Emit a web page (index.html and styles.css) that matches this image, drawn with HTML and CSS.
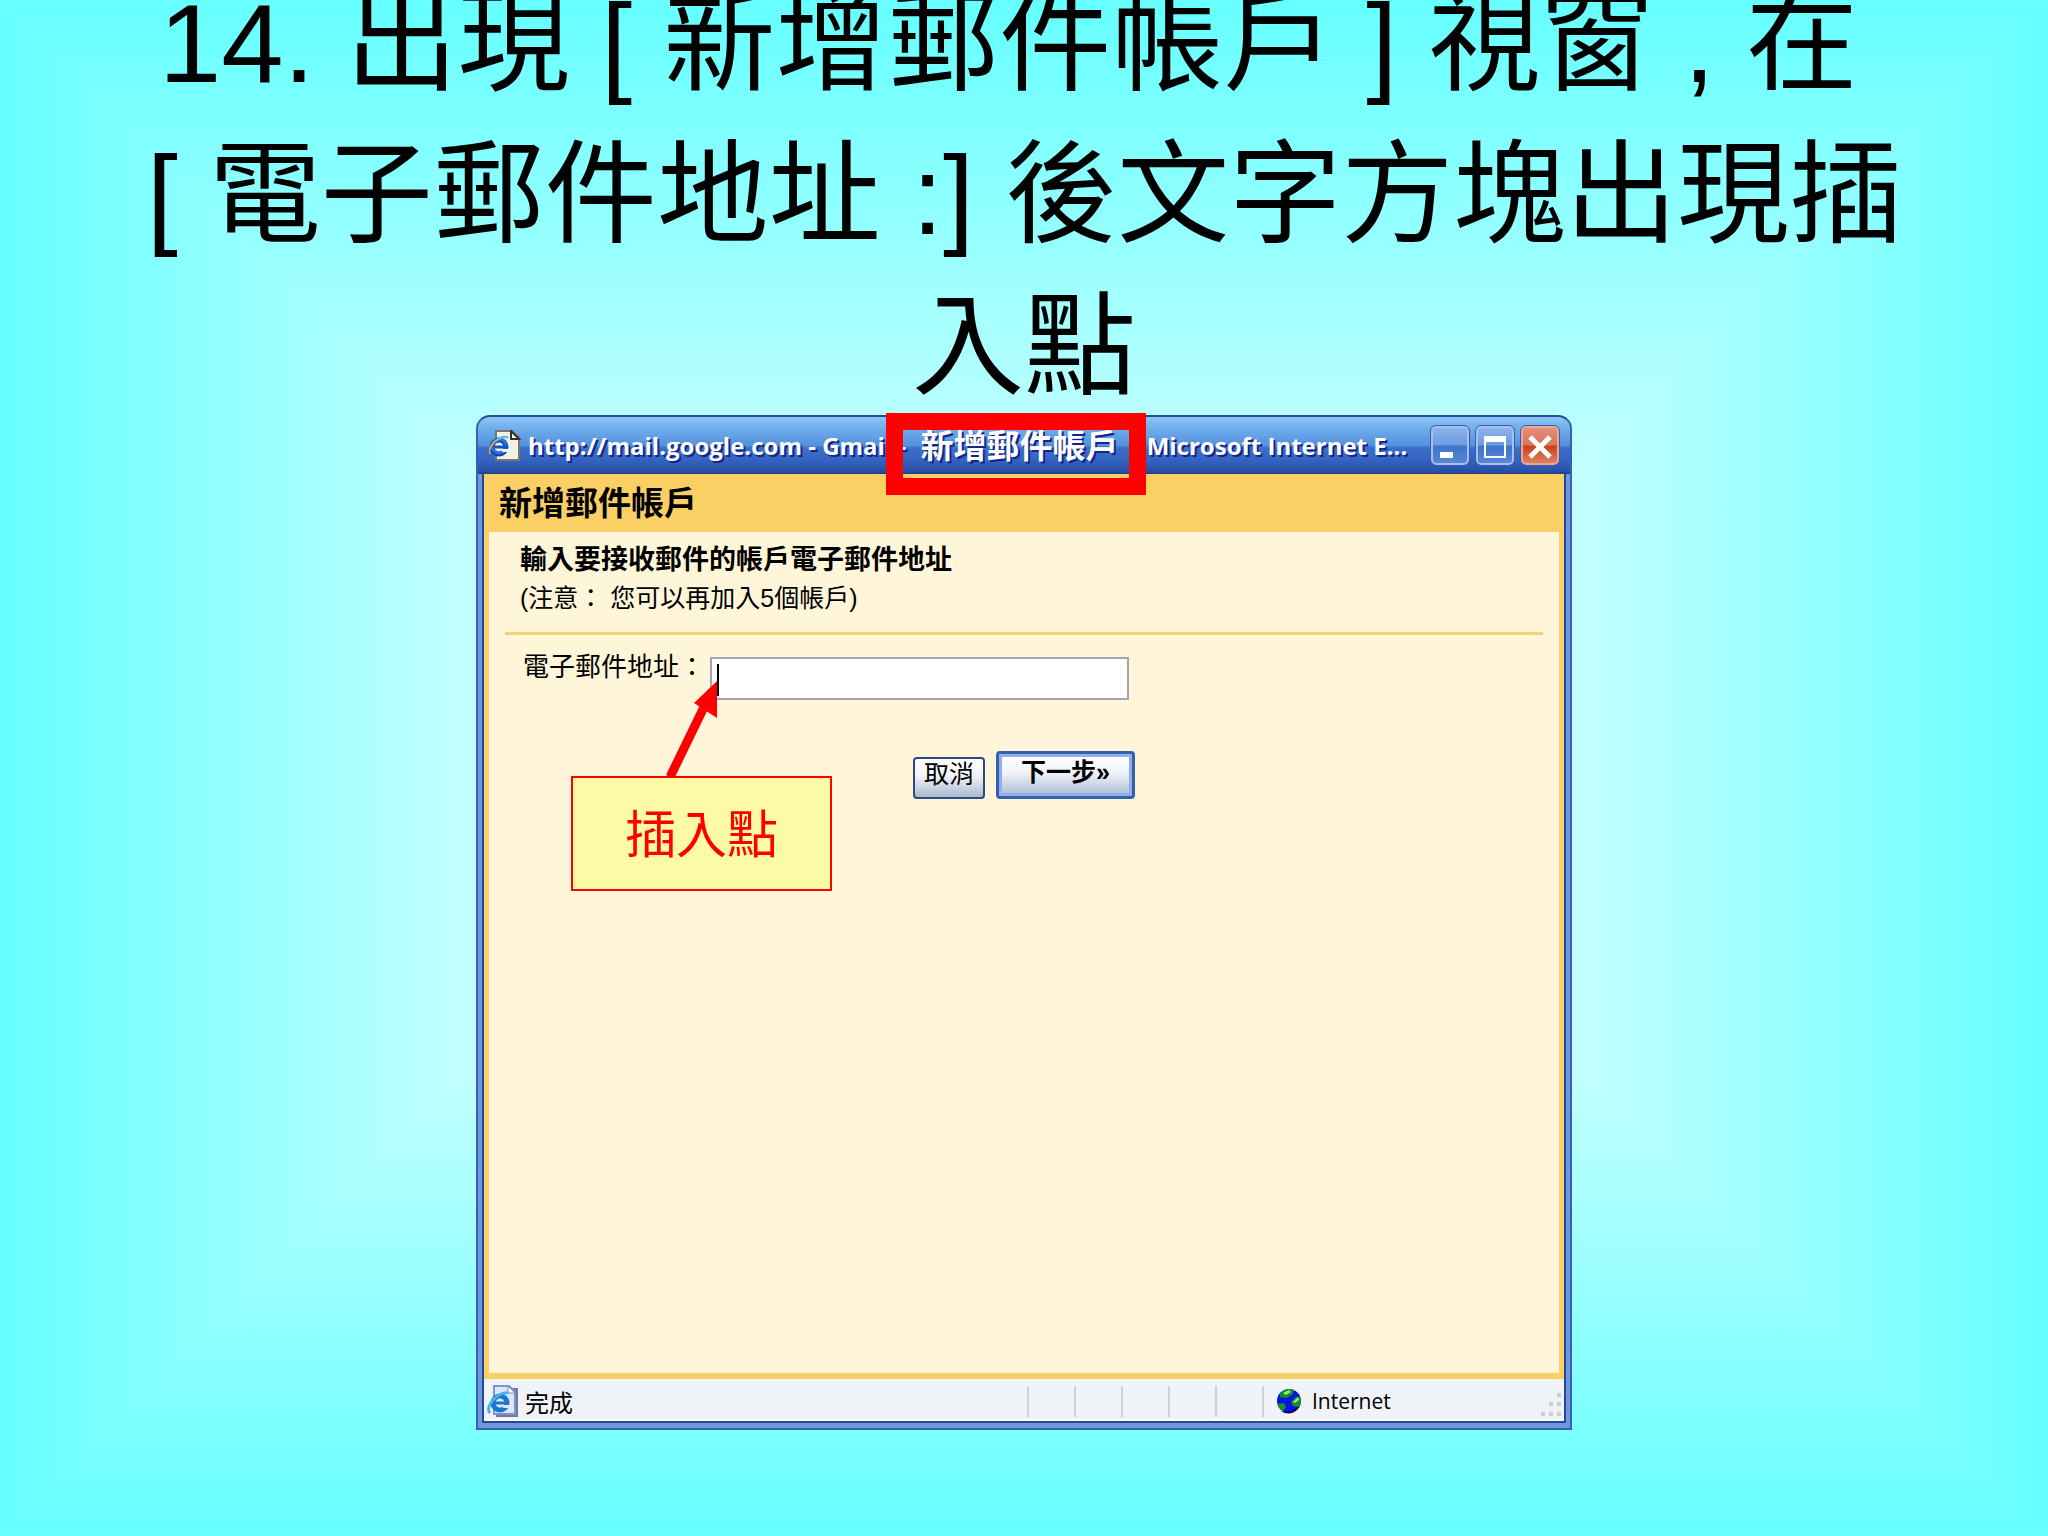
FILE: index.html
```html
<!DOCTYPE html>
<html lang="zh-Hant">
<head>
    <meta charset="UTF-8">
    <meta name="viewport" content="width=device-width, initial-scale=1.0">
    <title>新增郵件帳戶</title>
    <link rel="stylesheet" href="styles.css">
</head>
<body>
    <div class="slide">
        <h1 class="slide-title">14. 出現 [ 新增郵件帳戶 ] 視窗 , 在&nbsp;<br>[ 電子郵件地址 :] 後文字方塊出現插<br>入點</h1>
        <div class="window">
            <div class="titlebar">
                <svg class="page-icon" viewBox="0 0 32 32">
                    <path d="M7 1h16l7 7v22H7z" fill="#f3f1e4" stroke="#77766c" stroke-width="2"/>
                    <path d="M22 1v8h8z" fill="#fff" stroke="#33332e" stroke-width="2"/>
                    <circle cx="10" cy="17" r="7" fill="#f3f1e4" stroke="#123fae" stroke-width="5"/>
                    <circle cx="10" cy="16" r="7" fill="none" stroke="#1f74ea" stroke-width="3"/>
                    <path d="M5 17h14" stroke="#1450c4" stroke-width="3"/>
                    <path d="M13 19h7v3h-7z" fill="#f3f1e4"/>
                    <path d="M1 24C-2 17 9 6 19 7" fill="none" stroke="#e0a040" stroke-width="2"/>
                    <path d="M7 11c4-5 9-5 12-3" fill="none" stroke="#4fc0f8" stroke-width="2"/>
                </svg>
                <div class="caption">http://mail.google.com - Gmail - <span class="caption-cjk">新增郵件帳戶</span> - Microsoft Internet E...</div>
                <button class="win-btn" aria-label="最小化"><svg viewBox="0 0 38 38"><path d="M9 25h13v6H9z" fill="#fff"/></svg></button>
                <button class="win-btn" aria-label="最大化"><svg viewBox="0 0 38 38"><path d="M8 9h22v22H8zM10 15v14h18V15z" fill="#fff" fill-rule="evenodd"/></svg></button>
                <button class="win-btn close" aria-label="關閉"><svg viewBox="0 0 38 38"><path d="M9 10l20 20M29 10L9 30" stroke="#fff" stroke-width="5"/></svg></button>
                <div class="mark"></div>
            </div>
            <div class="client">
                <div class="page">
                    <h2 class="page-title">新增郵件帳戶</h2>
                    <form class="panel">
                        <div class="intro">
                            <p class="intro-title">輸入要接收郵件的帳戶電子郵件地址</p>
                            <p class="note">(注意： 您可以再加入5個帳戶)</p>
                        </div>
                        <div class="row">
                            <label for="email">電子郵件地址：</label>
                            <div class="field">
                                <input type="text" id="email">
                                <span class="caret"></span>
                                <svg class="arrow" viewBox="0 0 52 100">
                                    <path d="M4 98L40 24" stroke="#f00" stroke-width="9"/>
                                    <path d="M51 2v37L28 24z" fill="#f00"/>
                                </svg>
                                <div class="callout">插入點</div>
                            </div>
                        </div>
                        <div class="buttons">
                            <button type="button" class="btn">取消</button>
                            <button type="button" class="btn next">下一步»</button>
                        </div>
                    </form>
                </div>
                <div class="statusbar">
                    <svg class="page-icon" viewBox="0 0 32 32">
                        <path d="M9 3h22v29H9z" fill="#77779c"/>
                        <path d="M7 1h15l6 6v22H7z" fill="#dbe8fc" stroke="#7f92d2" stroke-width="2"/>
                        <path d="M21 1v7h7z" fill="#fff" stroke="#6d88c8"/>
                        <circle cx="13" cy="18" r="7" fill="none" stroke="#1b78c8" stroke-width="5"/>
                        <path d="M8 18h14" stroke="#1b78c8" stroke-width="3"/>
                        <path d="M16 20h7v3h-7z" fill="#dbe8fc"/>
                        <path d="M3 28C-3 21 12 6 21 8" fill="none" stroke="#49b1e8" stroke-width="3"/>
                    </svg>
                    <span class="done">完成</span>
                    <i></i><i></i><i></i><i></i><i></i>
                    <div class="zone">
                        <svg class="globe" viewBox="0 0 26 26">
                            <circle cx="13" cy="13" r="12" fill="#0a14e0"/>
                            <path d="M24 16a12 12 0 0 1-19 7c8 2 14 0 19-7z" fill="#00004a"/>
                            <path d="M4 6c4-5 10-6 14-4l-2 5-6 3-6-1z" fill="#15921b"/>
                            <path d="M7 5l6-3 2 2-5 3z" fill="#8bea80"/>
                            <path d="M2 16l6-1 2 4-3 4c-3-2-5-4-5-7z" fill="#15921b"/>
                            <path d="M24 9c2 4 1 8-2 10l-5-1-2-4 5-5z" fill="#15921b"/>
                            <path d="M22 9l1 3-4 3-2-1z" fill="#8bea80"/>
                        </svg>
                        <span>Internet</span>
                        <svg class="grip" viewBox="0 0 20 24"><path d="M16 0h4v4h-4zM8 9h4v4H8zM16 9h4v4h-4zM0 19h4v4H0zM8 19h4v4H8zM16 19h4v4h-4z" fill="#cdcdd2"/></svg>
                    </div>
                </div>
            </div>
        </div>
    </div>
</body>
</html>
```
FILE: styles.css
```css
*{
    padding: 0;
    margin: 0;
    box-sizing: border-box;
}
body{
    font-family: "Liberation Sans", "Noto Sans CJK TC", sans-serif;
    color: #000;
}
.slide{
    position: relative;
    display: flex;
    flex-direction: column;
    align-items: center;
    height: 100vh;
    min-height: 1200px;
    padding-bottom: 106px;
    overflow: hidden;
    background: linear-gradient(#66ffff, #ffffff 50%, #66ffff);
}
/* 左右两边的三角形渐变 */
.slide::before,
.slide::after{
    content: "";
    position: absolute;
    top: 0;
    bottom: 0;
    width: 50vh;
}
.slide::before{
    left: 0;
    background: linear-gradient(to right, #66ffff, #ffffff);
    clip-path: polygon(0 0, 100% 50%, 0 100%);
}
.slide::after{
    right: 0;
    background: linear-gradient(to left, #66ffff, #ffffff);
    clip-path: polygon(100% 0, 0 50%, 100% 100%);
}
.slide-title{
    position: relative;
    z-index: 1;
    margin-top: -32px;
    font-size: 112px;
    font-weight: 400;
    line-height: 152px;
    text-align: center;
    white-space: nowrap;
}

/* window */
.window{
    position: relative;
    z-index: 1;
    flex: 1;
    display: flex;
    flex-direction: column;
    width: 54%;
    max-width: 1096px;
    margin-top: -9px;
    padding: 0 4px 5px;
    border: 2px solid #3560b8;
    border-top-color: #274c9c;
    border-radius: 14px 14px 0 0;
    background: #7098d8;
}
.titlebar{
    position: relative;
    display: flex;
    align-items: center;
    gap: 7px;
    height: 57px;
    margin: 0 -4px;
    padding: 0 11px;
    border-radius: 12px 12px 0 0;
    background: linear-gradient(#8cc4f2, #6aa8ea 25%, #5590dc 50%, #3a70c8 54%, #3464c0 75%, #2a4ea8 96%, #1e3a80);
}
.page-icon{
    flex: none;
    width: 32px;
    height: 32px;
}
.caption{
    flex: 1;
    min-width: 0;
    overflow: hidden;
    font-family: "Open Sans", "Noto Sans CJK TC", sans-serif;
    font-size: 24px;
    font-weight: 700;
    line-height: 52px;
    color: #fff;
    text-shadow: 2px 2px 0 #14248a;
    white-space: nowrap;
}
.caption-cjk{
    padding: 0 8px;
    font-size: 33px;
    line-height: 33px;
    vertical-align: -3px;
}
.win-btn{
    flex: none;
    width: 38px;
    height: 39px;
    border: 2px solid #a5c2ee;
    border-radius: 5px;
    outline: 1px solid #3a5cb0;
    background: linear-gradient(#8db4ea, #6c9be0 48%, #3d74cc 52%, #5888d4);
}
.win-btn svg{
    display: block;
    width: 38px;
    height: 38px;
    margin: -2px;
}
.close{
    border-color: #eba695;
    background: linear-gradient(#e28e78, #d9765a 48%, #cc4318 52%, #e08060);
}
.mark{
    position: absolute;
    top: -4px;
    left: 408px;
    width: 260px;
    height: 82px;
    border: 17px solid #f00;
}

/* mail page */
.client{
    flex: 1;
    display: flex;
    flex-direction: column;
    border: 2px solid #24479c;
    border-top: 0;
}
.page{
    flex: 1;
    display: flex;
    flex-direction: column;
    padding: 0 5px 6px;
    background: #facf64;
}
.page-title{
    padding: 2px 10px 0;
    font-size: 33px;
    line-height: 56px;
}
.panel{
    flex: 1;
    padding: 0 16px;
    background: #fff5d9;
}
.intro{
    height: 103px;
    padding: 9px 15px 0;
    border-bottom: 3px solid #f9d070;
}
.intro-title{
    font-size: 27px;
    font-weight: 700;
    line-height: 39px;
}
.note{
    font-size: 25px;
    line-height: 36px;
}
.row{
    display: flex;
    padding: 22px 18px 0;
}
.row label{
    width: 187px;
    font-size: 26px;
    line-height: 20px;
    white-space: nowrap;
}
.field{
    position: relative;
    width: 419px;
}
.field input{
    display: block;
    width: 100%;
    height: 43px;
    padding: 0 8px;
    border: 2px solid #aaa2ae;
    background: #fff;
    font-size: 26px;
}
.caret{
    position: absolute;
    top: 7px;
    left: 7px;
    width: 2px;
    height: 32px;
    background: #000;
}
.arrow{
    position: absolute;
    top: 22px;
    left: -44px;
    width: 52px;
    height: 100px;
}
.callout{
    position: absolute;
    top: 119px;
    left: -139px;
    width: 261px;
    height: 115px;
    border: 2px solid #f00;
    background: #fcfaa4;
    color: #f00;
    font-size: 51px;
    line-height: 115px;
    text-align: center;
}
.buttons{
    display: flex;
    align-items: flex-end;
    gap: 11px;
    padding: 51px 0 0 408px;
}
.btn{
    width: 72px;
    height: 42px;
    padding-bottom: 9px;
    border: 2px solid #2c4a80;
    border-radius: 4px;
    background: linear-gradient(#fff, #f0f3f8 45%, #a8b8d0);
    font-family: inherit;
    font-size: 25px;
    line-height: 30px;
    white-space: nowrap;
}
.next{
    width: 139px;
    height: 48px;
    padding-bottom: 6px;
    border: 3px solid #3560ac;
    box-shadow: inset 0 0 0 3px #8fb0e8;
    font-weight: 700;
}

/* status bar */
.statusbar{
    display: flex;
    align-items: center;
    height: 42px;
    padding: 4px 3px 0;
    background: #eff3f8;
    border-bottom: 2px solid #fff;
    font-family: "Open Sans", "Noto Sans CJK TC", sans-serif;
    font-size: 21px;
}
.done{
    flex: 1;
    margin-left: 6px;
    font-size: 24px;
}
.statusbar i{
    width: 47px;
    height: 31px;
    border-left: 2px solid #cfd1d8;
}
.zone{
    display: flex;
    align-items: center;
    gap: 10px;
    width: 299px;
    height: 31px;
    padding-left: 12px;
    border-left: 2px solid #cfd1d8;
}
.globe{
    width: 26px;
    height: 26px;
}
.grip{
    align-self: flex-end;
    width: 20px;
    height: 24px;
    margin-left: auto;
}
```
